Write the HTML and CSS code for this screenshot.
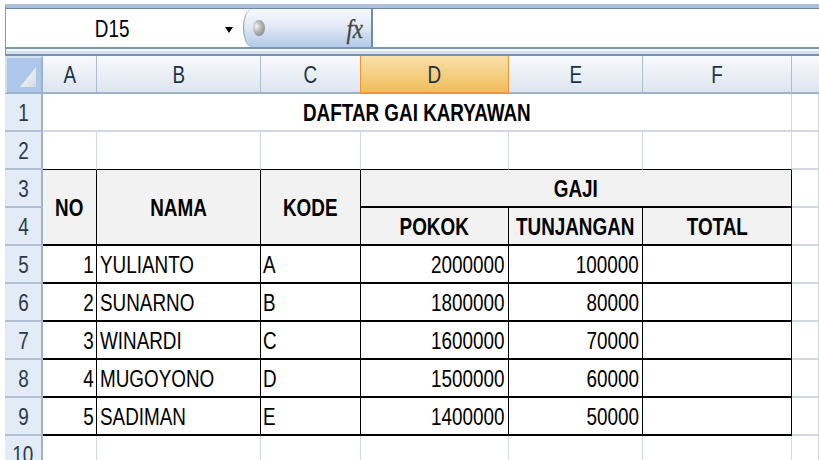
FILE: index.html
```html
<!DOCTYPE html>
<html>
<head>
<meta charset="utf-8">
<link rel="stylesheet" href="styles.css">
</head>
<body>
<div class="fbar">
  <div class="frow">
    <div class="namebox">
      <div class="nmarea"><span class="t">D15</span></div>
      <span class="arrow"></span>
    </div>
    <div class="fxbtn">
      <span class="orb"></span>
      <span class="fx">fx</span>
    </div>
    <div class="finput"></div>
  </div>
  <div class="strip"></div>
</div>
<div class="sheet">
  <div class="corner"><svg width="16" height="20" viewBox="0 0 16 20"><defs><linearGradient id="tg" x1="0" y1="0" x2="1" y2="1"><stop offset="0" stop-color="#ffffff"/><stop offset="1" stop-color="#d4d9e0"/></linearGradient></defs><polygon points="0,20 16,20 16,0" fill="url(#tg)"/></svg></div>
  <div class="ch"><span class="t">A</span></div>
  <div class="ch"><span class="t">B</span></div>
  <div class="ch"><span class="t">C</span></div>
  <div class="ch sel"><span class="t">D</span></div>
  <div class="ch"><span class="t">E</span></div>
  <div class="ch"><span class="t">F</span></div>
  <div class="ch last"></div>

  <div class="rh"><span class="t">1</span></div>
  <div class="c title"><span class="t">DAFTAR GAI KARYAWAN</span></div>
  <div class="c"></div>

  <div class="rh"><span class="t">2</span></div>
  <div class="c top"></div><div class="c top"></div><div class="c top"></div><div class="c top"></div><div class="c top"></div><div class="c top"></div>
  <div class="c"></div>

  <div class="rh"><span class="t">3</span></div>
  <div class="c b h s2"><span class="t">NO</span></div>
  <div class="c b h s2"><span class="t">NAMA</span></div>
  <div class="c b h s2"><span class="t">KODE</span></div>
  <div class="c b h s3"><span class="t">GAJI</span></div>
  <div class="c"></div>

  <div class="rh"><span class="t">4</span></div>
  <div class="c b h"><span class="t">POKOK</span></div>
  <div class="c b h"><span class="t">TUNJANGAN</span></div>
  <div class="c b h"><span class="t">TOTAL</span></div>
  <div class="c"></div>

  <div class="rh"><span class="t">5</span></div>
  <div class="c b r na"><span class="t">1</span></div>
  <div class="c b l"><span class="t">YULIANTO</span></div>
  <div class="c b l k"><span class="t">A</span></div>
  <div class="c b r"><span class="t">2000000</span></div>
  <div class="c b r"><span class="t">100000</span></div>
  <div class="c b"></div>
  <div class="c"></div>

  <div class="rh"><span class="t">6</span></div>
  <div class="c b r na"><span class="t">2</span></div>
  <div class="c b l"><span class="t">SUNARNO</span></div>
  <div class="c b l k"><span class="t">B</span></div>
  <div class="c b r"><span class="t">1800000</span></div>
  <div class="c b r"><span class="t">80000</span></div>
  <div class="c b"></div>
  <div class="c"></div>

  <div class="rh"><span class="t">7</span></div>
  <div class="c b r na"><span class="t">3</span></div>
  <div class="c b l"><span class="t">WINARDI</span></div>
  <div class="c b l k"><span class="t">C</span></div>
  <div class="c b r"><span class="t">1600000</span></div>
  <div class="c b r"><span class="t">70000</span></div>
  <div class="c b"></div>
  <div class="c"></div>

  <div class="rh"><span class="t">8</span></div>
  <div class="c b r na"><span class="t">4</span></div>
  <div class="c b l"><span class="t">MUGOYONO</span></div>
  <div class="c b l k"><span class="t">D</span></div>
  <div class="c b r"><span class="t">1500000</span></div>
  <div class="c b r"><span class="t">60000</span></div>
  <div class="c b"></div>
  <div class="c"></div>

  <div class="rh"><span class="t">9</span></div>
  <div class="c b r na"><span class="t">5</span></div>
  <div class="c b l"><span class="t">SADIMAN</span></div>
  <div class="c b l k"><span class="t">E</span></div>
  <div class="c b r"><span class="t">1400000</span></div>
  <div class="c b r"><span class="t">50000</span></div>
  <div class="c b"></div>
  <div class="c"></div>

  <div class="rh"><span class="t">10</span></div>
  <div class="c"></div><div class="c"></div><div class="c"></div><div class="c"></div><div class="c"></div><div class="c"></div><div class="c"></div>
</div>
</body>
</html>
```

FILE: styles.css
```css
* { box-sizing: border-box; }
html, body { margin: 0; height: 460px; overflow: hidden; background: #fff; }
body { font-family: "Liberation Sans", Arial, sans-serif; font-size: 23px; color: #000; }

.t { display: inline-block; line-height: 23px; white-space: nowrap; transform: scaleX(.82); }

/* formula bar */
.fbar { margin: 4px 0 0 5px; border-top: 4px solid #a9bfda; border-left: 1px solid #7b96b6; }
.frow { display: flex; height: 41px; border-top: 1px solid #6c88ab; border-bottom: 2px solid #7b96b6; }
.namebox { width: 237px; display: flex; align-items: center; background: #fff; }
.nmarea { width: 212px; display: flex; justify-content: center; padding-top: 3px; }
.arrow { margin: 4px 0 0 7px; width: 0; height: 0; border-left: 4.5px solid transparent; border-right: 4.5px solid transparent; border-top: 6px solid #000; }
.fxbtn {
  width: 130px; display: flex; align-items: center; justify-content: space-between;
  padding: 0 8px 0 9px;
  border-left: 1px solid #8aa2c1; border-right: 2px solid #6e8aad;
  border-radius: 9px 0 0 9px / 19px 0 0 19px;
  background: linear-gradient(#f7f9fd, #e2eaf6 45%, #b3c9e7);
}
.orb { width: 12px; height: 16px; border-radius: 50%; background: radial-gradient(ellipse at 30% 40%, #f4f4f4 0, #b4b4b4 40%, #7a7a7a 100%); }
.fx { font-family: "Liberation Serif", "Times New Roman", serif; font-style: italic; font-size: 23px; color: #474747; line-height: 24px; transform: scaleY(1.2); padding-top: 2px; -webkit-text-stroke: 0.3px #474747; }
.finput { flex: 1; background: #fff; }
.strip { height: 7px; background: linear-gradient(#f5f8fd 0 2px, #d5e0ef 2px); border-bottom: 2px solid #7891b0; }

/* sheet */
.sheet {
  margin-left: 5px; display: grid;
  grid-template-columns: 38px 54px 164px 100px 148px 134px 149px 1fr;
  grid-auto-rows: 38px;
}
.corner {
  background: #aec6e9; border: 2px solid #d3e0f1; border-right-color: #9db3cb; border-bottom-color: #9db3cb;
  display: flex; align-items: flex-end; justify-content: flex-end; padding: 0 5px 5px 0;
}
.ch {
  display: flex; justify-content: center; align-items: center; padding-top: 3px;
  background: linear-gradient(#f8fafd, #dce4ee);
  border-right: 1px solid #aabdd2; border-bottom: 2px solid #9db3cb; color: #1e3247;
}
.ch.sel { background: linear-gradient(#fae0ab, #efbd5a); border-right-color: #f29436; border-bottom-color: #f29436; box-shadow: -1px 0 0 #f29436; }
.ch.last { border-right: 0; }
.rh {
  display: flex; justify-content: center; align-items: center; padding-top: 3px;
  background: #e3ebf6; border-right: 2px solid #9db3cb; border-bottom: 2px solid #aebfd4; color: #2a3a4c;
}
.c {
  display: flex; align-items: center; padding-top: 3px;
  border-right: 1px solid #d0d7e5; border-bottom: 2px solid #d0d7e5;
}
.title { grid-column: span 6; justify-content: center; font-weight: bold; }
.top { border-bottom: 1px solid #000; }
.b { border-right-color: #000; border-bottom-color: #000; }
.h { background: #f2f2f2; font-weight: bold; justify-content: center; }
.s2 { grid-row: span 2; }
.s3 { grid-column: span 3; }
.r { justify-content: flex-end; padding-right: 3px; }
.r .t { transform-origin: right center; }
.na { padding-right: 2px; }
.l { padding-left: 3px; }
.k { padding-left: 2px; }
.l .t { transform-origin: left center; }
```
